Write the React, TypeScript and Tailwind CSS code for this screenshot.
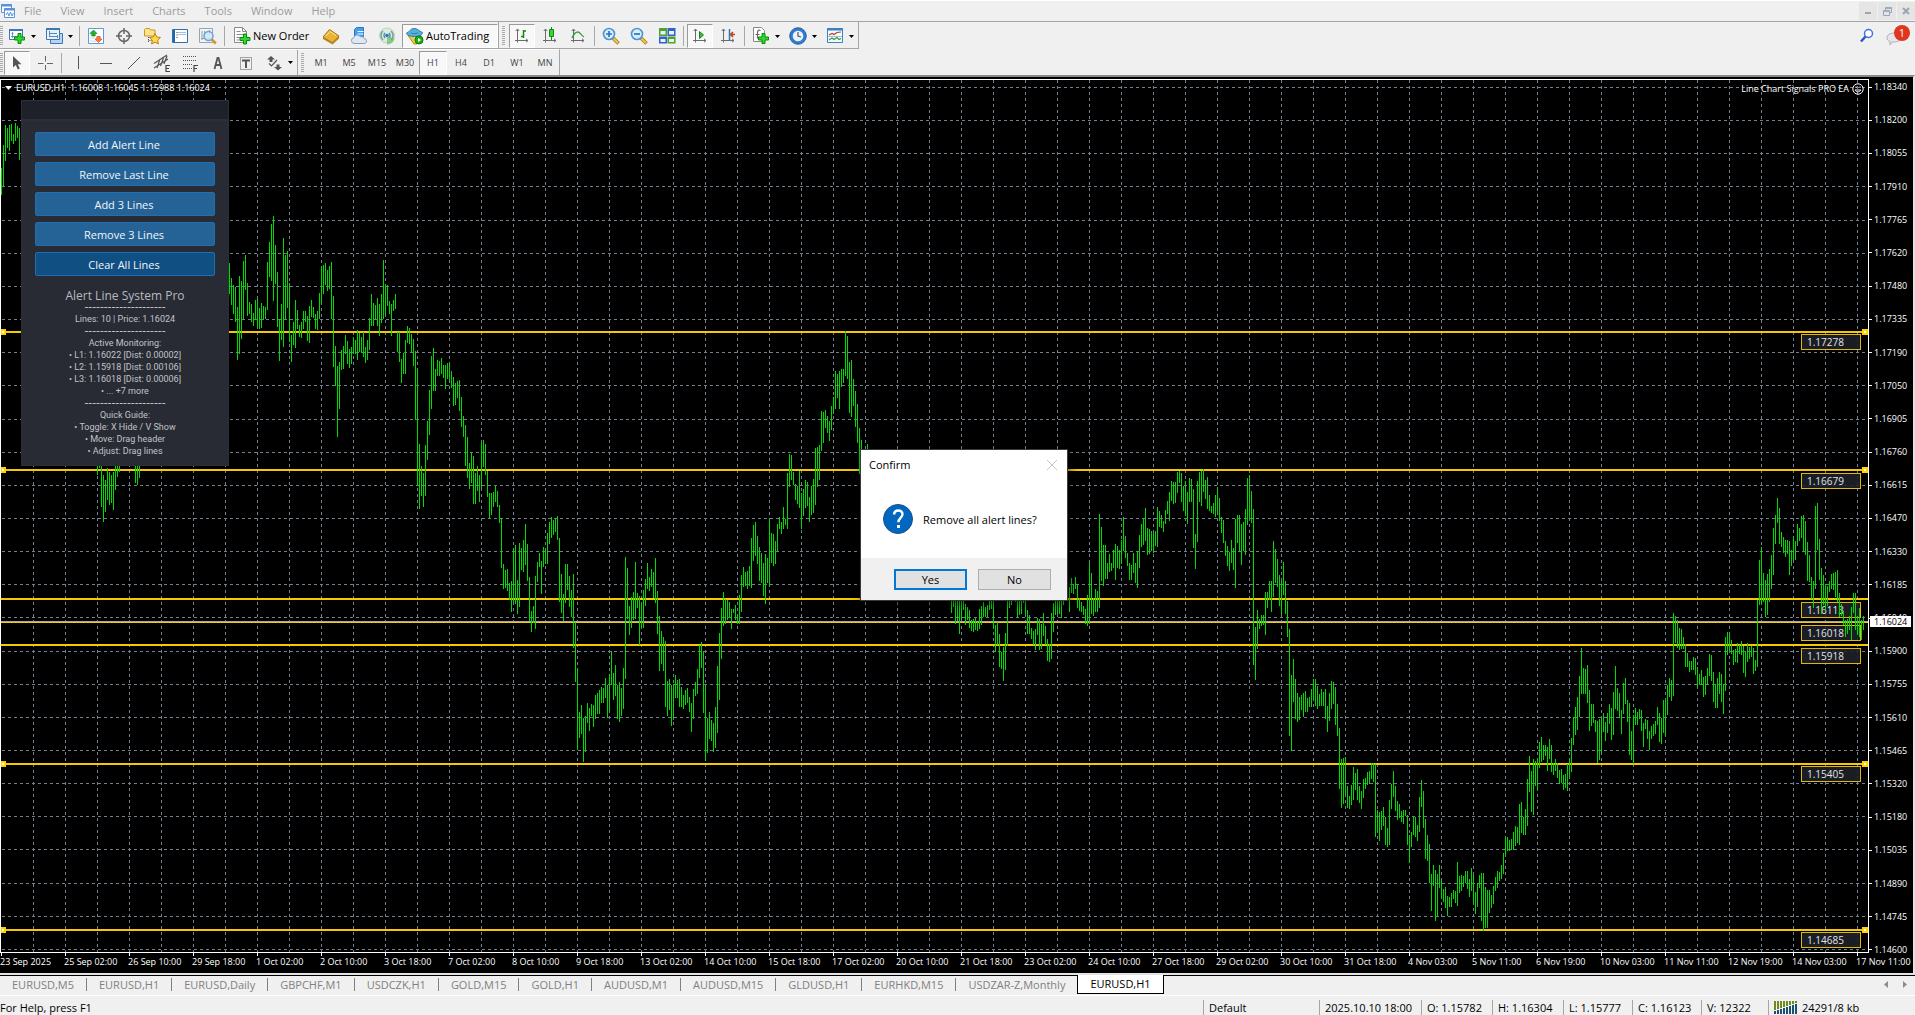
import type { ReactNode } from 'react'
import clsx from 'clsx'

const menus = ['File', 'View', 'Insert', 'Charts', 'Tools', 'Window', 'Help']
const timeframes = ['M1', 'M5', 'M15', 'M30', 'H1', 'H4', 'D1', 'W1', 'MN']

const tabs = [
  'EURUSD,M5', 'EURUSD,H1', 'EURUSD,Daily', 'GBPCHF,M1', 'USDCZK,H1', 'GOLD,M15', 'GOLD,H1',
  'AUDUSD,M1', 'AUDUSD,M15', 'GLDUSD,H1', 'EURHKD,M15', 'USDZAR-Z,Monthly', 'EURUSD,H1',
]

const prices = [
  '1.18340', '1.18200', '1.18055', '1.17910', '1.17765', '1.17620', '1.17480', '1.17335', '1.17190',
  '1.17050', '1.16905', '1.16760', '1.16615', '1.16470', '1.16330', '1.16185', '1.16040', '1.15900',
  '1.15755', '1.15610', '1.15465', '1.15320', '1.15180', '1.15035', '1.14890', '1.14745', '1.14600',
]

const times = [
  '23 Sep 2025', '25 Sep 02:00', '26 Sep 10:00', '29 Sep 18:00', '1 Oct 02:00', '2 Oct 10:00',
  '3 Oct 18:00', '7 Oct 02:00', '8 Oct 10:00', '9 Oct 18:00', '13 Oct 02:00', '14 Oct 10:00',
  '15 Oct 18:00', '17 Oct 02:00', '20 Oct 10:00', '21 Oct 18:00', '23 Oct 02:00', '24 Oct 10:00',
  '27 Oct 18:00', '29 Oct 02:00', '30 Oct 10:00', '31 Oct 18:00', '4 Nov 03:00', '5 Nov 11:00',
  '6 Nov 19:00', '10 Nov 03:00', '11 Nov 11:00', '12 Nov 19:00', '14 Nov 03:00', '17 Nov 11:00',
]

const alertLines = [
  { price: '1.17278', y: 252, tagY: 254, selected: true },
  { price: '1.16679', y: 390, tagY: 393, selected: true },
  { price: '1.16113', y: 519, tagY: 522, selected: false },
  { price: '1.16018', y: 542, tagY: 545, selected: false },
  { price: '1.15918', y: 565, tagY: 568, selected: false },
  { price: '1.15405', y: 684, tagY: 686, selected: true },
  { price: '1.14685', y: 850, tagY: 852, selected: true },
]

// Each run is a list of high-low pairs in thirds of a pixel below y, one bar every two pixels from x.
const runs = [
  { x: 0, y: 0, bars: '265-345 195-320 135-242 143-205 135-213 132-183 162-192 128-183 138-175 143-240' },
  { x: 96, y: 360, bars: '60-105 45-84 66-201 105-246 120-216 84-180 96-195 105-189 96-210 75-150 60-111 60-96' },
  { x: 134, y: 360, bars: '75-129 66-135 60-114' },
  {
    x: 228,
    y: 0,
    bars: `548-642 593-675 615-702 621-726 681-840 588-822 603-777 543-718 525-630 609-708 666-702 672-726
      699-738 660-720 657-741 684-747 669-744 678-720 681-718 546-690 486-591 432-603 408-663 495-612
      576-741 717-843 672-780 474-801 525-720 513-684 609-786 765-846 726-795 660-804 690-747 735-771
      726-774 693-747 693-726 708-783 678-789 660-711 681-714 702-747 693-750 639-717 558-672 555-642
      549-615 570-633 558-627 546-717 648-861 798-918 858-1071 846-987 810-870 798-867 765-822 783-852
      807-864 801-852 771-822 780-822 750-840 759-816 771-819 756-831 801-849 780-840 714-810 642-738
      669-738 675-717 654-738 672-768 642-729 540-717 612-708 615-678 663-702 672-768 660-693 642-687
      756-816 756-846`,
  },
  {
    x: 400,
    y: 220,
    bars: `177-249 159-222 120-222 78-129 84-132 102-157 117-198 153-360 204-555 432-627 498-588 519-621
      435-588 363-480 270-405 168-327 144-273 207-273 180-228 183-228 174-222 195-234 195-267 189-237
      189-240 213-264 231-318 249-315 243-294 240-333 291-381 348-411 375-498 411-534 489-567 456-549
      468-612 519-612 498-573 525-606 429-564 420-501 432-525 513-591 579-654 579-645 576-621 558-606
      573-621 615-669 654-804 792-867 810-864 807-873 849-900 843-936 744-906 735-912 840-942 729-921
      744-810 720-816 672-795 732-843 831-963 933-996 918-969 828-987 786-846 759-801 783-882 741-801
      744-792 699-792 666-732 651-714 660-705 657-696 648-720 714-906 822-939 882-963 792-909 792-870
      828-921 870-951 822-1044 966-1146 1104-1350 1236-1314 1215-1302 1254-1386 1248-1356 1209-1269
      1224-1293 1212-1248 1215-1281 1185-1257 1179-1242 1170-1242 1161-1209 1164-1209 1134-1194
      1155-1254 1122-1236 1053-1155 1119-1200 1095-1188 1155-1257 1146-1266 1164-1248 1104-1227
      771-1137 804-957 918-1005 891-984 876-960 786-957 879-924 888-1035 909-984 870-984 837-918
      789-867 831-873 807-861 816-894 774-909 873-1002 948-1113 993-1092 1011-1113 1023-1221 1143-1248
      1137-1230 1155-1278 1152-1260 1125-1194 1140-1194 1137-1221 1161-1221 1185-1227 1170-1215
      1164-1209 1191-1236 1209-1296 1167-1257 1146-1188 1107-1182 1035-1134 1026-1104 1053-1239
      1155-1383 1254-1359 1236-1317 1260-1323 1269-1356 1221-1344 1098-1299 999-1200 924-1077 876-978
      897-972 900-960 906-954 927-987 927-939 915-960 942-972 885-972 825-936 801-861 816-858 813-867
      798-858 714-864 675-783 666-768 708-792 741-843 759-849 789-888 762-912 774-849 657-858 699-789
      702-798 723-792 672-756 651-687 666-702 621-687 657-675 519-687 462-561 465-540 516-555 552-600
      558-612 513-624 579-687 567-648 540-624 546-618 591-666 558-645 537-639 444-615 441-561 435-540
      333-453 336-429 330-384 348-399 363-423 318-390 291-342 213-327 222-294 213-327 207-261 207-249
      93-228 108-237 186-339 180-351 237-318 273-381 312-429 384-522 420-480 450-500 460-510 432-500`,
  },
  {
    x: 950,
    y: 360,
    bars: `440-519 450-501 450-552 450-543 450-582 450-540 450-510 492-555 501-540 510-564 540-573 537-576
      534-570 546-573 507-567 498-555 486-531 501-531 495-531 470-510 470-507 480-567 555-636 546-615
      582-681 636-687 621-723 579-690 480-618 470-504 470-495 450-470 470-486 470-531 470-525 470-522
      470-489 470-521 510-582 525-582 564-597 573-615 567-630 534-585 537-630 552-627 519-588 558-615
      597-663 612-666 519-657 489-576 470-525 470-522 470-522 470-534 470-495 440-480 429-480 441-516
      414-459 432-462 411-447 432-504 474-513 486-516 498-525 507-552 465-558 369-552 399-522 474-528
      447-516 453-516 222-504 261-423 315-438 315-417 369-417 342-396 369-393 330-384 312-420 318-384
      330-387 300-372 231-333 288-354 339-378 369-420 375-420 339-399 369-429 333-444 285-384 252-321
      234-315 204-303 264-345 267-342 273-333 279-339 273-318 201-321 213-261 225-264 243-276 210-252
      183-222 156-243 123-183 126-192 126-189 96-159 93-129 99-186 138-213 123-228 156-252 114-186
      117-186 147-324 282-387 123-306 96-186 93-198 87-156 120-177 111-207 165-213 198-219 189-222
      165-231 141-222 174-243 231-279 240-309 303-348 318-378 336-393 300-369 324-390 237-444 225-309
      225-333 252-375 246-333 207-345 114-255 105-237 153-249 207-675 561-720 510-627 537-567 525-558
      525-555 456-585 456-504 423-480 423-516 303-471 327-429 357-441 405-498 423-522 366-465 423-522
      483-591 567-888 705-933 657-786 717-837 759-846 771-840 765-810 759-831 753-816 774-816 771-801
      747-801 717-780 717-798 738-807 762-798 747-798 756-798 747-837 798-876 759-843 723-807 726-792
      741-855 792-888`,
  },
  {
    x: 1338,
    y: 640,
    bars: `24-207 117-264 114-252 111-222 198-264 228-267 195-255 141-240 159-210 147-240 198-249 213-267
      177-234 174-207 156-195 153-192 129-177 129-186 132-351 270-339 276-363 273-330 261-318 291-375
      324-381 240-375 192-267 153-231 198-273 243-300 252-294 273-306 270-312 270-288 285-375 345-429
      336-381 291-345 291-351 315-363 231-336 180-261 213-324 297-417 345-423 372-489 462-573 435-498
      450-603 462-591 435-504 480-534 507-546 501-564 528-588 531-561 519-561 510-537 513-549 426-558
      468-519 465-513 468-501 453-489 453-507 477-531 444-513 465-549 516-582 489-561 465-504 459-603
      459-633 501-624 510-624 510-579 525-564 498-552 471-513 453-504 456-483 435-477 399-462 351-411
      351-393 360-393 357-390 336-390 318-378 321-369 252-375 246-339 291-345 267-345 177-318 108-216
      153-276 117-285 123-198 117-210 66-144 51-126 75-120 75-108 81-153 57-117 75-156 129-165 117-153
      129-174 150-192 147-189 165-210 162-204 132-213 120-177 54-156`,
  },
  {
    x: 1572,
    y: 360,
    bars: `831-915 801-885 771-870 708-831 624-762 684-762 687-762 675-789 750-873 792-858 792-849 840-876
      843-969 837-960 837-939 819-876 846-903 819-879 792-852 804-900 756-885 678-807 744-813 759-834
      810-882 729-822 714-792 780-846 789-945 873-960 825-972 804-855 816-855 807-837 810-873 849-921
      837-867 840-897 873-930 858-897 852-888 843-882 801-855 819-906 834-912 780-879 780-887 735-825
      714-771 720-783 519-768 528-609 540-624 564-630 567-627 591-627 612-681 639-681 663-696 663-690
      651-690 654-705 681-741 702-735 690-735 711-771 708-765 684-735 642-708 645-723 696-786 732-804
      714-804 696-762 702-786 732-822 591-753 576-645 576-633 600-642 630-675 627-666 609-669 615-642
      603-645 618-699 633-711 609-666 621-657 618-651 624-702 660-693 480-681 360-495 321-492 399-486
      420-531 402-525 387-486 345-447 264-405 225-312 174-249 204-312 276-321 291-339 300-351 300-342
      303-405 330-378 291-360 303-360 252-318 264-303 228-294 225-333 243-345 306-423 345-426 411-477
      423-504 198-447 189-330 297-420 384-522 405-495 432-510 438-498 423-456 402-447 399-450 396-471
      390-486 459-531 492-528 513-555 540-591 537-582 528-570 501-600 459-519 459-570 528-585 504-591
      540-600 528-570`,
  },
]

const barsPath = runs
  .map(({ x, y, bars }) =>
    bars
      .split(/\s+/)
      .map((bar, i) => {
        const [high, low] = bar.split('-').map(Number)
        return `M${x + i * 2 + 0.5} ${y + Math.round(high / 3)}V${y + Math.round(low / 3)}`
      })
      .join('')
  )
  .join('')

const gridColumns = Array.from({ length: 80 }, (_, i) => 32 + i * 32)
const gridRows = prices.map((_, i) => Math.round(7 + i * 33.15))

/* ---------- icons ---------- */

function Svg({ children, size = 18 }: { children: ReactNode; size?: number }) {
  return (
    <svg width={size} height={size} viewBox={`0 0 ${size} ${size}`} fill="none" className="shrink-0" aria-hidden="true">
      {children}
    </svg>
  )
}

const Plus = ({ x = 7, y = 6 }) => (
  <path
    transform={`translate(${x} ${y})`}
    d="M4 .5h3V4h3.500v3H7v3.500H4V7H.5V4H4z"
    fill="#2fd82f"
    stroke="#0a8a0a"
  />
)

const AppIcon = () => (
  <Svg size={16}>
    <path d="M1.500 1.500h10v8h-10z" fill="#fff" stroke="#5a93dc" />
    <path d="M1 2.500h11" stroke="#5a93dc" strokeWidth="2" />
    <path d="M4.500 5.500h10v9h-10z" fill="#fff" stroke="#5a93dc" />
    <path d="M4 6.500h11" stroke="#5a93dc" strokeWidth="2" />
    <path d="M6 12l1.500-2.500L9 13l1.500-4 1.500 4 1.500-3" stroke="#5a93dc" />
  </Svg>
)

const NewChartIcon = () => (
  <Svg>
    <path d="M1.500 2.500h13v10h-13z" fill="#fff" stroke="#3a78b8" />
    <path d="M1 3h14" stroke="#3a78b8" strokeWidth="2" />
    <path d="M4.500 5v6M3 9.500h7M3.500 6.500h2" stroke="#6b96c0" />
    <Plus x={6} y={6} />
  </Svg>
)

const ProfilesIcon = () => (
  <Svg>
    <path d="M5.500 6.500h12v10h-12z" fill="#b9d4ee" stroke="#3a78b8" />
    <path d="M1.500 1.500h13v11h-13z" fill="#e8f2fb" stroke="#3a78b8" />
    <path d="M1 2h14" stroke="#3a78b8" strokeWidth="2" />
    <path d="M4.500 4v6M4 6.500h8M4 9.500h9M12.500 8v3" stroke="#5b87b5" />
  </Svg>
)

const MarketWatchIcon = () => (
  <Svg>
    <path d="M1.500 1.500h15v15h-15z" fill="#fff" stroke="#5f9bd6" />
    <path d="M3 5h3M3 8h2M3 11h5M3 14h6" stroke="#c9d6e2" />
    <path d="M6.500 3l3.500 3.500H8.200V9H4.800V6.500H3z" fill="#23b323" stroke="#0d7a1a" strokeWidth=".6" />
    <path d="M11.500 15.500L8 12h1.800V9.500h3.400V12H15z" fill="#ff7a3a" stroke="#d34010" strokeWidth=".6" />
  </Svg>
)

const TargetIcon = () => (
  <Svg>
    <circle cx="9" cy="9" r="5.500" stroke="#666" strokeWidth="1.500" />
    <path d="M9 1v6M9 11v6M1 9h6M11 9h6" stroke="#666" strokeWidth="1.500" />
  </Svg>
)

const NavigatorIcon = () => (
  <Svg>
    <path d="M1.500 2.500l1-1h4l1 1.500h4.500v6h-10.500z" fill="#ffe28a" stroke="#c39a2a" />
    <path d="M5.500 10v6M5.500 13.500h3" stroke="#555" strokeDasharray="1 1" />
    <path d="M12 6.500l1.700 3.500 3.800.5-2.800 2.600.7 3.900-3.400-1.900L8.600 17l.7-3.900-2.800-2.600 3.800-.5z" fill="#ffd74a" stroke="#b8861b" />
  </Svg>
)

const TerminalIcon = () => (
  <Svg>
    <path d="M1.500 2.500h15v13h-15z" fill="#fff" stroke="#2f6fb4" />
    <path d="M3 3v12" stroke="#2463aa" strokeWidth="2" />
    <path d="M7 5.500h8M7 7.500h8" stroke="#9fbfe0" />
    <path d="M5.500 5.500h1M5.500 8h1M5.500 10.500h1" stroke="#333" />
  </Svg>
)

const TesterIcon = () => (
  <Svg>
    <path d="M.5 1.500h13v14h-13z" fill="#f3f3f3" stroke="#9aa4ad" />
    <path d="M3 4v9M2 11.500h9M5.500 4v5M10.500 3v5" stroke="#8aa" />
    <circle cx="9.500" cy="9" r="4.500" fill="#cfe6fa" fillOpacity=".85" stroke="#6fa3d4" strokeWidth="1.500" />
    <path d="M12.800 12.500l4 4" stroke="#c9982c" strokeWidth="2.500" />
  </Svg>
)

const NewOrderIcon = () => (
  <Svg>
    <path d="M1.500.5h8l4 4v11h-12z" fill="#fff" stroke="#8a8a8a" />
    <path d="M9.500.5v4h4" stroke="#8a8a8a" />
    <path d="M3.500 4.500h4M3.500 7.500h7M3.500 10.500h4M3.500 13h3" stroke="#888" />
    <Plus x={6.500} y={6.500} />
  </Svg>
)

const BookIcon = () => (
  <Svg>
    <path d="M1 10l6.500-7.500L17 9l-6.500 7z" fill="#e9b335" stroke="#a87413" />
    <path d="M1 10l9.500 5 6.500-6v2.500L10.500 17.500 1 12z" fill="#b98322" />
    <path d="M4 9l4-4.500 6 4" stroke="#ffe29a" />
  </Svg>
)

const CloudServerIcon = () => (
  <Svg>
    <path d="M4.500 2.500l2-2h7v9h-9z" fill="#3fa2ef" stroke="#2278c4" />
    <path d="M7.500 4.500h6M7.500 7h6" stroke="#fff" />
    <path d="M4 16.500a3 3 0 01-.2-5.900 3.500 3.500 0 016.400-1 3.300 3.300 0 013.900 2 2.500 2.500 0 01.6 4.900z" fill="#dfe7f2" stroke="#8b9cb8" />
  </Svg>
)

const SignalsIcon = () => (
  <Svg>
    <circle cx="9" cy="8.500" r="7.500" fill="#dcebdc" stroke="#b9cfc4" />
    <path d="M5 13a6 6 0 010-9M13 4a6 6 0 010 9" stroke="#6da58c" strokeWidth="1.500" />
    <path d="M7 11a3.500 3.500 0 010-5M11 6a3.500 3.500 0 010 5" stroke="#4a86b8" strokeWidth="1.300" />
    <circle cx="9" cy="8.500" r="1.800" fill="#2a75b8" />
    <path d="M9 9v8.500c4 0 7-2.500 7.500-6" fill="#57b557" fillOpacity=".6" />
  </Svg>
)

const AutoTradingIcon = () => (
  <Svg>
    <path d="M2 8.500h13l-4 8.500H8z" fill="#f5c93c" stroke="#b98b16" />
    <path d="M.5 6C4 5 4 1.500 8 1.500S12.500 4 16.500 5.500c0 2.500-4 4-8 4S.5 8.500.5 6z" fill="#5aaedb" stroke="#2b7fae" />
    <path d="M5 6c2 1 5 1 7-.3" stroke="#2b7fae" />
    <circle cx="13" cy="13" r="4" fill="#17b117" stroke="#0b7d0b" />
    <path d="M12 11l3.200 2-3.200 2z" fill="#fff" />
  </Svg>
)

const Axes = () => (
  <path d="M4.500 2v13.500M2 13.500h13M2.800 4l1.700-2 1.700 2M13 11.800l2 1.700-2 1.700" stroke="#6b6b6b" />
)

const BarChartIcon = () => (
  <Svg>
    <Axes />
    <path d="M10.500 3v8M8 9.500h2.500M10.500 4h2.500" stroke="#128a12" strokeWidth="1.500" />
  </Svg>
)

const CandlesIcon = () => (
  <Svg>
    <Axes />
    <path d="M10.500 0v13" stroke="#128a12" />
    <path d="M8.500 2.500h4v7h-4z" fill="#33d833" stroke="#128a12" />
  </Svg>
)

const LineChartIcon = () => (
  <Svg>
    <Axes />
    <path d="M3 11c2-5 4-6 6-6s3 3 6 5" stroke="#3aa03a" strokeWidth="1.300" />
  </Svg>
)

const ZoomIcon = ({ zoomIn = false }) => (
  <Svg>
    <path d="M10.500 10.500l6 6" stroke="#a87d16" strokeWidth="3.500" />
    <path d="M11.500 11.500l4.500 4.500" stroke="#ecc84b" strokeWidth="2" />
    <circle cx="7" cy="7" r="5.500" fill="#d8edfc" stroke="#4f97d4" strokeWidth="1.700" />
    <path d={zoomIn ? 'M4 7h6M7 4v6' : 'M4 7h6'} stroke="#2c77b8" strokeWidth="1.700" />
  </Svg>
)

const TileIcon = () => (
  <Svg>
    <path d="M1 1h8v8H1zM9.500 9.500h8v7h-8z" fill="#4fa32a" />
    <path d="M9.500 1h8v8h-8zM1 9.500h8v7H1z" fill="#2f62cf" />
    <path d="M2.500 4h5v3.500h-5zM11 4h5v3.500h-5zM2.500 12h5v3h-5zM11 12h5v3h-5z" fill="#e8f0fa" />
  </Svg>
)

const AutoScrollIcon = () => (
  <Svg>
    <Axes />
    <path d="M8.500 4.500l4 3.500-4 3.500z" fill="#36c236" stroke="#128a12" />
  </Svg>
)

const ShiftIcon = () => (
  <Svg>
    <Axes />
    <path d="M10.500 2v11" stroke="#3374b8" strokeWidth="1.500" />
    <path d="M16 7.500h-4M14 5l-2.500 2.500L14 10" stroke="#b8431a" strokeWidth="1.500" />
  </Svg>
)

const IndicatorsIcon = () => (
  <Svg>
    <path d="M1.500.5h8l3 3v11h-11z" fill="#fff" stroke="#8a8a8a" />
    <path d="M8.500 3.500c-2-1-3 .5-3 2v6M3.500 7.500h4" stroke="#666" strokeWidth="1.200" />
    <Plus x={6} y={6} />
  </Svg>
)

const ClockIcon = () => (
  <Svg>
    <circle cx="9" cy="9" r="6.800" fill="#eaf4fd" stroke="#2f7bd6" strokeWidth="3" />
    <circle cx="9" cy="9" r="8.300" stroke="#174c94" strokeWidth=".8" />
    <path d="M9 5v4l3 1" stroke="#555" strokeWidth="1.200" />
  </Svg>
)

const TemplatesIcon = () => (
  <Svg>
    <path d="M1.500 1.500h15v14h-15z" fill="#f4fafe" stroke="#3a82c4" />
    <path d="M1 2.500h16" stroke="#3a82c4" strokeWidth="2" />
    <path d="M3 8l3-1.500 2 1 3-2 4-.5" stroke="#b5402a" strokeWidth="1.200" />
    <path d="M3 13l3-2 2 1.500 3-2 2 2 2-1" stroke="#3a9a3a" strokeWidth="1.200" />
    <path d="M2 9.500h14" stroke="#9dc3e4" />
  </Svg>
)

const CursorIcon = () => (
  <Svg>
    <path d="M5 2v11.500l2.800-2.500 2 4.500 2-1-2-4.200H13.500z" fill="#555" />
  </Svg>
)

const drawTools: { name: string; icon: ReactNode }[] = [
  { name: 'Vertical line', icon: <path d="M9.500 2v13" stroke="#555" /> },
  { name: 'Horizontal line', icon: <path d="M3 9.500h12" stroke="#555" /> },
  { name: 'Trendline', icon: <path d="M3 15L15 3" stroke="#555" /> },
  {
    name: 'Equidistant channel',
    icon: (
      <>
        <path d="M1 9.500L14 1M1 14L15 5M4 14l3-9M7.500 12l3-8M11 10l3-8" stroke="#555" strokeWidth="1.200" />
        <path d="M17 11.500h-4v6h4M13 14.500h3" stroke="#444" strokeWidth="1.200" />
      </>
    ),
  },
  {
    name: 'Fibonacci retracement',
    icon: (
      <>
        <path d="M2 2.500h14M2 6.500h14M2 10.500h10M2 14.500h9" stroke="#555" strokeDasharray="1 1" />
        <path d="M17 11.500h-4v6.500M13 14.500h3" stroke="#444" strokeWidth="1.200" />
      </>
    ),
  },
  { name: 'Text', icon: <path d="M5.500 15L8.500 4h1l3 11M6.500 11h5" stroke="#555" strokeWidth="1.800" /> },
  {
    name: 'Text label',
    icon: (
      <>
        <path d="M3.500 3.500h11v12h-11z" stroke="#555" strokeDasharray="1 1" />
        <path d="M5 6.500h8M9 6v8" stroke="#555" strokeWidth="2" />
      </>
    ),
  },
]

const CrosshairIcon = () => (
  <Svg>
    <path d="M9.500 2v5.500M9.500 11v5M2 9.500h5.500M11 9.500h6" stroke="#666" />
  </Svg>
)

const ArrowsIcon = () => (
  <Svg>
    <path d="M6 2l4 3.500H7.500V8h-3V5.500H2z" fill="#555" />
    <path d="M4 9.500l2.500 2.500L12 6" stroke="#555" strokeWidth="1.200" />
    <path d="M13 16.500L9 13h2.500v-2.500h3V13H17z" fill="#555" />
  </Svg>
)

/* ---------- toolbar parts ---------- */

function Tool({ name, children, active }: { name: string; children: ReactNode; active?: boolean }) {
  return (
    <span className="flex w-7 shrink-0 justify-center">
      <button
        aria-label={name}
        className={clsx(
          'flex h-6 w-[26px] items-center justify-center border',
          active ? 'border-b-white border-l-[#9a9a9a] border-r-white border-t-[#9a9a9a] bg-[#f8f8f8]' : 'border-transparent'
        )}
      >
        {children}
      </button>
    </span>
  )
}

function DropTool({ name, children }: { name: string; children: ReactNode }) {
  return (
    <button aria-label={name} className="flex h-6 w-[37px] shrink-0 items-center gap-1 pl-[5px]">
      {children}
      <svg width="5" height="3" viewBox="0 0 5 3" className="ml-px" aria-hidden="true">
        <path d="M0 0h5L2.500 3z" fill="#000" />
      </svg>
    </button>
  )
}

const Separator = () => <span className="mx-[2px] h-5 w-px shrink-0 bg-[#a8a8a8]" />
const Grip = () => (
  <span className="mx-[3px] h-5 w-[3px] shrink-0 bg-[repeating-linear-gradient(#aaa_0_1px,#f0f0f0_1px_2px)]" />
)

function Toolbars() {
  return (
    <div className="flex items-start justify-between bg-[#f0f0f0]">
      <div>
        <div className="flex h-[27px] w-max items-center border-b border-r border-[#a5a5a5] pt-[2px]">
          <span className="h-5 w-[3px] bg-[repeating-linear-gradient(#aaa_0_1px,#f0f0f0_1px_2px)]" />
          <DropTool name="New chart"><NewChartIcon /></DropTool>
          <DropTool name="Profiles"><ProfilesIcon /></DropTool>
          <Separator />
          <Tool name="Market Watch"><MarketWatchIcon /></Tool>
          <Tool name="Data Window"><TargetIcon /></Tool>
          <Tool name="Navigator"><NavigatorIcon /></Tool>
          <Tool name="Terminal"><TerminalIcon /></Tool>
          <Tool name="Strategy Tester"><TesterIcon /></Tool>
          <Separator />
          <button className="flex h-6 w-[90px] items-center gap-[2px] pl-[6px] text-[11px] text-black">
            <NewOrderIcon />
            New Order
          </button>
          <Tool name="MetaEditor"><BookIcon /></Tool>
          <Tool name="Virtual hosting"><CloudServerIcon /></Tool>
          <Tool name="Signals"><SignalsIcon /></Tool>
          <button className="ml-px flex h-6 w-24 items-center gap-[2px] border border-b-white border-l-[#9a9a9a] border-r-white border-t-[#9a9a9a] bg-[#f8f8f8] pl-[3px] text-[11px] text-black">
            <AutoTradingIcon />
            AutoTrading
          </button>
          <span className="-mt-[2px] h-[26px] w-px bg-[#a5a5a5]" />
          <Grip />
          <Tool name="Bar chart" active><BarChartIcon /></Tool>
          <Tool name="Candlesticks"><CandlesIcon /></Tool>
          <Tool name="Line chart"><LineChartIcon /></Tool>
          <Separator />
          <Tool name="Zoom in"><ZoomIcon zoomIn /></Tool>
          <Tool name="Zoom out"><ZoomIcon /></Tool>
          <Tool name="Tile windows"><TileIcon /></Tool>
          <Separator />
          <Tool name="Auto scroll" active><AutoScrollIcon /></Tool>
          <Tool name="Chart shift"><ShiftIcon /></Tool>
          <Separator />
          <DropTool name="Indicators"><IndicatorsIcon /></DropTool>
          <DropTool name="Periods"><ClockIcon /></DropTool>
          <DropTool name="Templates"><TemplatesIcon /></DropTool>
        </div>
        <div className="flex h-[26px] w-max items-center border-r border-[#a5a5a5] border-t border-t-white">
          <span className="h-5 w-[3px] bg-[repeating-linear-gradient(#aaa_0_1px,#f0f0f0_1px_2px)]" />
          <Tool name="Cursor" active><CursorIcon /></Tool>
          <Tool name="Crosshair"><CrosshairIcon /></Tool>
          <Separator />
          {drawTools.map((tool) => (
            <Tool key={tool.name} name={tool.name}><Svg>{tool.icon}</Svg></Tool>
          ))}
          <DropTool name="Arrows"><ArrowsIcon /></DropTool>
          <span className="h-[25px] w-px bg-[#a5a5a5]" />
          <Grip />
          {timeframes.map((tf) => (
            <button
              key={tf}
              className={clsx(
                'h-6 w-7 border text-[9px] text-[#444]',
                tf === 'H1' ? 'border-b-white border-l-[#9a9a9a] border-r-white border-t-[#9a9a9a] bg-[#f8f8f8]' : 'border-transparent'
              )}
            >
              {tf}
            </button>
          ))}
        </div>
      </div>
      <div className="flex items-center gap-3 pr-[5px] pt-1">
        <button aria-label="Search">
          <Svg size={16}>
            <circle cx="10.500" cy="5.500" r="4" fill="#fff" stroke="#3d6fe0" strokeWidth="1.500" />
            <path d="M7.500 8.500L3 13.500" stroke="#2b55c8" strokeWidth="2.500" />
          </Svg>
        </button>
        <button aria-label="1 new message" className="relative flex h-5 w-6 items-end">
          <svg width="16" height="14" viewBox="0 0 16 14" aria-hidden="true">
            <path d="M8 1c4 0 7 2 7 4.500S12 10 8 10H6l-2 3v-3.500C2 9 1 7.500 1 5.500 1 3 4 1 8 1z" fill="#e6e6ea" stroke="#b0b0b8" />
          </svg>
          <span className="absolute -top-px right-0 size-4 rounded-full bg-[#e0351e] text-center text-[11px] leading-4 text-white">1</span>
        </button>
      </div>
    </div>
  )
}

function MenuBar() {
  return (
    <header className="flex h-[22px] items-center justify-between border-b border-b-[#a5a5a5] border-t border-t-white bg-[#f0f0f0]">
      <nav className="flex items-center gap-px text-[11px] text-[#9c9c9c]">
        <AppIcon />
        {menus.map((menu) => (
          <button key={menu} className="px-[9px] leading-5 first-of-type:pl-[7px]">{menu}</button>
        ))}
      </nav>
      <div className="flex gap-px text-[#98a5b3]">
        <button aria-label="Minimize" className="flex h-[18px] w-[18px] items-center justify-center bg-[#e5e5e5]">
          <svg width="8" height="8"><path d="M1 6h6" stroke="currentColor" strokeWidth="2" /></svg>
        </button>
        <button aria-label="Restore" className="flex h-[18px] w-[18px] items-center justify-center bg-[#e5e5e5]">
          <svg width="9" height="9" fill="none">
            <path d="M2.500 3V1h6v4.500H6.500M.5 4h6v4.500h-6z" stroke="currentColor" />
            <path d="M2 1h7M0 4h7" stroke="currentColor" strokeWidth="1.500" />
          </svg>
        </button>
        <button aria-label="Close" className="flex h-[18px] w-[18px] items-center justify-center bg-[#e5e5e5]">
          <svg width="8" height="8"><path d="M1 1l6 6M7 1L1 7" stroke="currentColor" strokeWidth="2" /></svg>
        </button>
      </div>
    </header>
  )
}

/* ---------- chart ---------- */

const actions = ['Add Alert Line', 'Remove Last Line', 'Add 3 Lines', 'Remove 3 Lines', 'Clear All Lines']
const rule = '---------------------'
const notes = [
  rule,
  'Lines: 10 | Price: 1.16024',
  rule,
  'Active Monitoring:',
  '• L1: 1.16022 [Dist: 0.00002]',
  '• L2: 1.15918 [Dist: 0.00106]',
  '• L3: 1.16018 [Dist: 0.00006]',
  '• ... +7 more',
  rule,
  'Quick Guide:',
  '• Toggle: X Hide / V Show',
  '• Move: Drag header',
  '• Adjust: Drag lines',
]

function AlertPanel() {
  return (
    <section className="absolute left-5 top-5 w-52 border border-[#2c2f38] bg-[#282b34] pb-[8px]">
      <div className="h-5 border-b-2 border-[#2c2f38] bg-[#1f212a]" />
      <div className="flex flex-col gap-[6px] px-[13px] pt-[11px]">
        {actions.map((label) => (
          <button
            key={label}
            className={clsx(
              'h-6 rounded-[2px] border border-[#1f6fb5] pr-[2px] text-[11px] leading-6 text-[#f0f5fa]',
              label === 'Clear All Lines' ? 'bg-[#104f82]' : 'bg-[#256397]'
            )}
          >
            {label}
          </button>
        ))}
      </div>
      <h2 className="mt-[14px] text-center text-[12px] leading-[11px] text-[#b6bac0]">Alert Line System Pro</h2>
      <div className="text-center font-[Roboto,sans-serif] text-[9px] text-[#c0c3c8]">
        {notes.map((note, i) => (
          <p key={i} className={clsx('leading-3', note === rule && 'font-[Open_Sans,sans-serif] text-[12px]')}>{note}</p>
        ))}
      </div>
    </section>
  )
}

function Handle({ x, y }: { x: number | string; y: number }) {
  return (
    <svg x={x} y={y - 3} overflow="visible">
      <path d="M-1 0h6v6h-6z" fill="#ffd200" />
      <path d="M1 2h2v2H1z" fill="#fff" />
    </svg>
  )
}

function Plot() {
  return (
    <div className="relative flex-1 overflow-hidden border border-white text-[9px] text-white">
      <svg className="absolute inset-0 size-full" shapeRendering="crispEdges" aria-hidden="true">
        <g stroke="#708090" strokeDasharray="3 3">
          {gridColumns.map((x) => <line key={x} x1={x + 0.5} x2={x + 0.5} y1="0" y2="100%" />)}
          {gridRows.map((y) => <line key={y} x1="1" x2="100%" y1={y + 0.5} y2={y + 0.5} />)}
        </g>
      </svg>
      {alertLines.map(({ price, tagY }) => (
        <div
          key={price}
          style={{ top: tagY }}
          className="absolute right-[7px] h-4 w-[60px] border border-[#e0b80c] bg-[#1e2028]/90 pl-[5px] text-[10px] leading-[14px] text-[#e4e4e4]"
        >
          {price}
        </div>
      ))}
      <svg className="absolute inset-0 size-full" shapeRendering="crispEdges" aria-hidden="true">
        {alertLines.map(({ price, y }) => (
          <line key={price} x1="0" x2="100%" y1={price === '1.16018' ? y + 0.5 : y} y2={price === '1.16018' ? y + 0.5 : y} stroke="#f5c800" strokeWidth={price === '1.16018' ? 1 : 2} />
        ))}
        <line x1="0" x2="100%" y1="541.5" y2="541.5" stroke="#a8a8a8" />
        <path d={barsPath} stroke="#00dc00" />
        {alertLines.filter((line) => line.selected).map(({ price, y }) => (
          <g key={price}>
            <Handle x={0} y={y} />
            <svg x="100%" overflow="visible"><Handle x={-5} y={y} /></svg>
          </g>
        ))}
      </svg>
      <div className="absolute left-1 top-[2px] flex items-center gap-1 leading-3">
        <svg width="7" height="4" aria-hidden="true"><path d="M0 0h7L3.500 4z" fill="#fff" /></svg>
        <span className="whitespace-pre">EURUSD,H1  1.16008 1.16045 1.15988 1.16024</span>
      </div>
      <div className="absolute right-1 top-[3px] flex items-center gap-[3px] leading-3">
        Line Chart Signals PRO EA
        <svg width="12" height="12" viewBox="0 0 12 12" fill="none" stroke="#fff" aria-hidden="true">
          <circle cx="6" cy="6" r="5.200" />
          <path d="M4 3.500v1.500M8 3.500v1.500M3 7c1.500 2.500 4.500 2.500 6 0z" />
        </svg>
      </div>
      <AlertPanel />
    </div>
  )
}

function Chart() {
  return (
    <main className="flex min-h-0 flex-1 border-r-2 border-t-2 border-[#e3e3e3] border-t-[#8a8a8a] bg-black pt-[2px] text-[9px] text-white">
      <div className="flex min-w-0 flex-1 flex-col">
        <Plot />
        <div className="flex h-5">
          {times.map((time) => (
            <span key={time} className="w-16 shrink-0 whitespace-nowrap">
              <span className="ml-px block h-[3px] w-px bg-white" />
              <span className="block leading-[11px]">{time}</span>
            </span>
          ))}
        </div>
      </div>
      <div className="relative flex w-11 flex-col justify-between pb-4 pt-px">
        {prices.map((price) => (
          <span key={price} className="flex items-center gap-[2px] leading-[14px]">
            <span className="h-px w-[3px] bg-white" />
            {price}
          </span>
        ))}
        <span className="absolute left-px top-[537px] h-[11px] w-[41px] bg-white pl-1 leading-[11px] text-black">1.16024</span>
      </div>
    </main>
  )
}

function ConfirmDialog() {
  return (
    <div
      role="dialog"
      aria-labelledby="confirm-title"
      className="absolute left-[860px] top-[449px] w-52 border border-[#3a3a3a] bg-white text-[11px] text-black shadow-[2px_3px_8px_rgba(0,0,0,0.5)]"
    >
      <div className="flex h-[30px] items-center justify-between pl-2 pr-[10px]">
        <h2 id="confirm-title">Confirm</h2>
        <button aria-label="Close">
          <svg width="10" height="10"><path d="M0 0l10 10M10 0L0 10" stroke="#c4c4c4" /></svg>
        </button>
      </div>
      <div className="flex h-[78px] items-center gap-[10px] pl-[22px]">
        <svg width="30" height="30" viewBox="0 0 30 30" fill="none" aria-hidden="true">
          <circle cx="15" cy="15" r="14.500" fill="#0067c0" stroke="#16518a" />
          <path d="M11 10.500c.3-2.600 2-4 4.300-4s4.200 1.400 4.200 3.700c0 3.600-4.100 3.700-4.100 8" stroke="#fff" strokeWidth="2.400" />
          <path d="M14 21h3v3h-3z" fill="#fff" />
        </svg>
        <p className="pt-[2px]">Remove all alert lines?</p>
      </div>
      <div className="flex justify-end gap-[11px] bg-[#f0f0f0] pb-[10px] pr-4 pt-[11px]">
        <button className="h-[21px] w-[73px] border-2 border-[#0078d7] bg-[#e1e1e1] leading-[17px]">Yes</button>
        <button className="h-[21px] w-[73px] border border-[#adadad] bg-[#e1e1e1] leading-[19px]">No</button>
      </div>
    </div>
  )
}

function ChartTabs() {
  return (
    <div className="flex h-[20px] items-start justify-between border-t border-black bg-[#f0f0f0]">
      <div className="flex text-[11px] text-[#808080]">
        {tabs.map((tab, i) => {
          const active = i === tabs.length - 1
          return (
            <button
              key={i}
              className={clsx(
                'flex items-center',
                active && '-mt-px h-[19px] border border-t-0 border-black bg-white pb-px text-black',
                !active && 'h-4'
              )}
            >
              <span className={clsx('px-3 leading-[13px]', i < tabs.length - 2 && 'border-r border-[#808080]')}>{tab}</span>
            </button>
          )
        })}
      </div>
      <div className="flex gap-[15px] pr-2 pt-[5px]">
        <button aria-label="Scroll tabs left">
          <svg width="4" height="7" className="block"><path d="M4 0v7L0 3.500z" fill="#8c8c8c" /></svg>
        </button>
        <button aria-label="Scroll tabs right">
          <svg width="4" height="7" className="block"><path d="M0 0v7l4-3.500z" fill="#8c8c8c" /></svg>
        </button>
      </div>
    </div>
  )
}

function StatusBar() {
  return (
    <footer className="flex h-[20px] items-end border-t border-white bg-[#f0f0f0] text-[11px] leading-[15px] text-black">
      <span className="flex-1">For Help, press F1</span>
      <span className="w-[116px] border-l border-[#a5a5a5] pl-[5px]">Default</span>
      <span className="w-[102px] border-l border-[#a5a5a5] pl-[5px]">2025.10.10 18:00</span>
      <span className="w-[71px] border-l border-[#a5a5a5] pl-[5px]">O: 1.15782</span>
      <span className="w-[71px] border-l border-[#a5a5a5] pl-[5px]">H: 1.16304</span>
      <span className="w-[69px] border-l border-[#a5a5a5] pl-[5px]">L: 1.15777</span>
      <span className="w-[69px] border-l border-[#a5a5a5] pl-[5px]">C: 1.16123</span>
      <span className="w-[67px] border-l border-[#a5a5a5] pl-[5px]">V: 12322</span>
      <span className="flex w-[147px] items-center gap-1 border-l border-[#a5a5a5] pl-[5px]">
        <svg width="24" height="13" shapeRendering="crispEdges" aria-hidden="true">
          {[0, 1, 2, 3, 4, 5, 6, 7].map((i) => (
            <g key={i}>
              <rect x={i * 3} y="0" width="2" height={9 - i} fill="#6f8a1a" />
              <rect x={i * 3} y={10 - i} width="2" height={3 + i} fill="#1d4f73" />
            </g>
          ))}
        </svg>
        24291/8 kb
      </span>
    </footer>
  )
}

export default function App() {
  return (
    <div className="relative flex h-screen flex-col overflow-hidden bg-[#f0f0f0] font-[Open_Sans,Noto_Sans,sans-serif]">
      <MenuBar />
      <Toolbars />
      <Chart />
      <div className="h-[2px] shrink-0 bg-[#e3e3e3]" />
      <ChartTabs />
      <StatusBar />
      <ConfirmDialog />
    </div>
  )
}
